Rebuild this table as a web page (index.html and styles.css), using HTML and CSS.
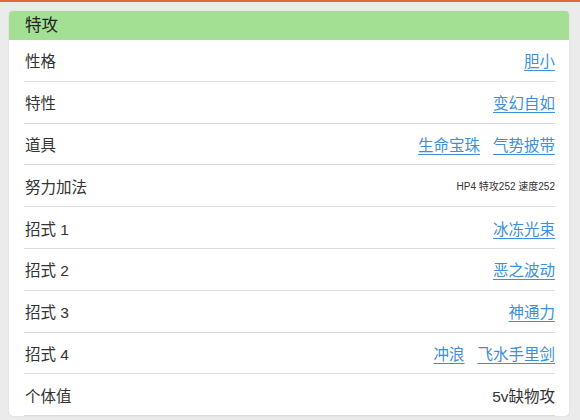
FILE: index.html
```html
<!DOCTYPE html>
<html lang="zh-CN">
<head>
<meta charset="utf-8">
<link rel="stylesheet" href="styles.css">
</head>
<body>
<div class="topbar"></div>
<div class="card">
  <div class="card-head">特攻</div>
  <div class="rows">
    <div class="row"><span class="label">性格</span><span class="vals"><a class="link">胆小</a></span></div>
    <div class="row"><span class="label">特性</span><span class="vals"><a class="link">变幻自如</a></span></div>
    <div class="row"><span class="label">道具</span><span class="vals"><a class="link">生命宝珠</a><a class="link">气势披带</a></span></div>
    <div class="row"><span class="label">努力加法</span><span class="vals small">HP4 特攻252 速度252</span></div>
    <div class="row"><span class="label">招式 1</span><span class="vals"><a class="link">冰冻光束</a></span></div>
    <div class="row"><span class="label">招式 2</span><span class="vals"><a class="link">恶之波动</a></span></div>
    <div class="row"><span class="label">招式 3</span><span class="vals"><a class="link">神通力</a></span></div>
    <div class="row"><span class="label">招式 4</span><span class="vals"><a class="link">冲浪</a><a class="link">飞水手里剑</a></span></div>
    <div class="row"><span class="label">个体值</span><span class="vals plain">5v缺物攻</span></div>
  </div>
</div>
</body>
</html>
```
FILE: styles.css
```css
html, body {
  margin: 0;
  padding: 0;
  background: #ebebeb;
  font-family: "Liberation Sans", "Noto Sans CJK SC", sans-serif;
  color: #333;
  height: 420px;
  overflow: hidden;
}
.topbar {
  height: 2px;
  background: #e06a3c;
}
.card {
  margin: 9px 11px 0 9px;
  background: #fff;
  border-radius: 4px;
  box-shadow: 0 0 1px rgba(0,0,0,0.25);
  overflow: hidden;
}
.card-head {
  height: 29px;
  background: #a3e094;
  font-size: 16.5px;
  line-height: 29px;
  padding-left: 16px;
  color: #222;
}
.rows {
  padding: 0 14px 0 15px;
}
.row {
  box-sizing: border-box;
  height: 41.8px;
  border-bottom: 1px solid #dcdcdc;
  display: flex;
  align-items: center;
  justify-content: space-between;
  font-size: 15.5px;
}
.label {
  padding-left: 1px;
}
.vals {
  display: flex;
  gap: 13px;
}
.link {
  color: #3d8fd9;
  text-decoration: underline;
  text-underline-offset: 3px;
  text-decoration-thickness: 1px;
}
.small {
  font-size: 10px;
  color: #333;
}
.plain {
  color: #333;
}
```
